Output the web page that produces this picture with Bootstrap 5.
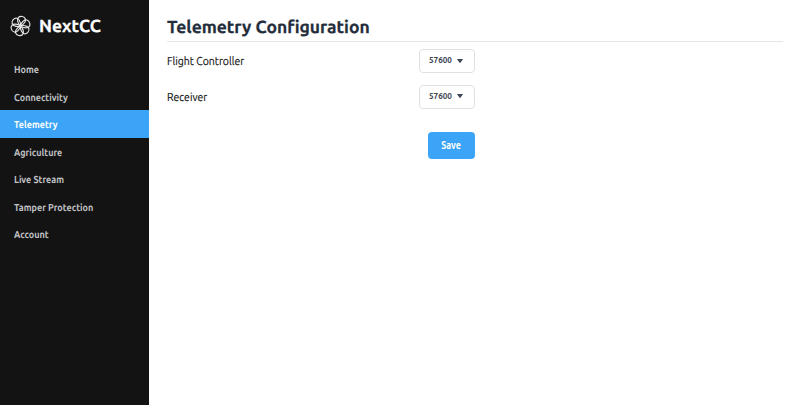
<!DOCTYPE html>
<html lang="en">
<head>
<meta charset="utf-8">
<meta name="viewport" content="width=device-width, initial-scale=1">
<title>NextCC</title>
<link href="https://cdn.jsdelivr.net/npm/bootstrap@5.3.0/dist/css/bootstrap.min.css" rel="stylesheet">
<style>
body{font-family:Ubuntu,"Noto Sans","Open Sans",sans-serif;font-size:11.5px;line-height:16px;color:#111;background:#fff;text-rendering:geometricPrecision}
.side{width:149px;background:#131313}
.brand-row{height:52px;padding-left:10px;gap:8px;color:#fff}
.brand-name{font-size:17.4px;font-weight:700;line-height:24px;padding-top:1px;-webkit-text-stroke:.25px}
.side .nav{margin-top:3.4px}
.side .nav-link{height:27.5px;padding:2px 14px 0;font-size:10.1px;font-weight:600;color:#c1c3c6;display:flex;align-items:center;white-space:nowrap}
.side .nav-link.active{background:#3ca4f6;color:#fff}
/* slightly condensed lettering */
.narrow{display:inline-block;transform:scaleX(.895);transform-origin:left}
.content{padding:15px 17px 0 18px}
.page-title{font-size:17.5px;font-weight:700;line-height:24px;color:#232d3b;padding:1px 0 1px;border-bottom:1px solid #e3e5e8;-webkit-text-stroke:.25px;letter-spacing:-.02px}
.field-row{padding-top:7px}
.field-row + .field-row{padding-top:11.5px}
.field-name{width:252px;padding:2px 0 0}
.field-name .narrow{-webkit-text-stroke:.15px;transform:scaleX(.91)}
.rate{width:56px;height:24px;padding:0 0 0 9px;font-size:9.1px;font-weight:600;color:#3f4856;border:1px solid #dfe1e6;border-radius:4px;line-height:1;gap:3px}
.rate svg{margin:0 0 1px -1px}
.save{width:47px;height:27px;margin:23.5px 0 0 261px;padding:0;font-size:10px;line-height:1;font-weight:600;color:#fff;background:#3ca4f6;border:0;border-radius:4px}
.save .narrow{transform-origin:center}
.save:hover{background:#2996ec;color:#fff}
</style>
<script src="https://cdn.jsdelivr.net/npm/bootstrap@5.3.0/dist/js/bootstrap.bundle.min.js"></script>
</head>
<body>
<div class="d-flex vh-100 overflow-hidden">
<aside class="side flex-shrink-0">
<div class="brand-row d-flex align-items-center">
<svg width="21" height="22" viewBox="-10.5 -11 21 22" fill="none" stroke="#e4e4e4" stroke-width="1.15">
<defs><path id="petal" d="M-.6 0C-3.4-3-4.8-6-3.5-8C-2-10.4 2.3-10.1 3.6-7.8C4.8-5.7 3.2-3 .6 0"/></defs>
<g transform="rotate(10)"><use href="#petal"/><use href="#petal" transform="rotate(60)"/><use href="#petal" transform="rotate(120)"/><use href="#petal" transform="rotate(180)"/><use href="#petal" transform="rotate(240)"/><use href="#petal" transform="rotate(300)"/></g>
<circle r="1.8" fill="#e4e4e4" stroke="none"/>
</svg>
<span class="brand-name">NextCC</span>
</div>
<nav class="nav flex-column flex-nowrap">
<a class="nav-link" href="#"><span class="narrow">Home</span></a>
<a class="nav-link" href="#"><span class="narrow">Connectivity</span></a>
<a class="nav-link active" href="#"><span class="narrow">Telemetry</span></a>
<a class="nav-link" href="#"><span class="narrow">Agriculture</span></a>
<a class="nav-link" href="#"><span class="narrow">Live Stream</span></a>
<a class="nav-link" href="#"><span class="narrow">Tamper Protection</span></a>
<a class="nav-link" href="#"><span class="narrow">Account</span></a>
</nav>
</aside>
<main class="content flex-grow-1">
<h1 class="page-title mb-0">Telemetry Configuration</h1>
<div class="field-row d-flex align-items-center"><div class="field-name"><span class="narrow">Flight Controller</span></div><button class="btn rate d-flex align-items-center"><span class="narrow">57600</span><svg width="6" height="4" viewBox="0 0 6 4"><path d="M.4 0h5.2q.6 0 .2.6L3.4 3.7q-.4.4-.8 0L.2.6Q-.2 0 .4 0z" fill="#3f4856"/></svg></button></div>
<div class="field-row d-flex align-items-center"><div class="field-name"><span class="narrow">Receiver</span></div><button class="btn rate d-flex align-items-center"><span class="narrow">57600</span><svg width="6" height="4" viewBox="0 0 6 4"><path d="M.4 0h5.2q.6 0 .2.6L3.4 3.7q-.4.4-.8 0L.2.6Q-.2 0 .4 0z" fill="#3f4856"/></svg></button></div>
<button class="btn save d-block"><span class="narrow">Save</span></button>
</main>
</div>
</body>
</html>
